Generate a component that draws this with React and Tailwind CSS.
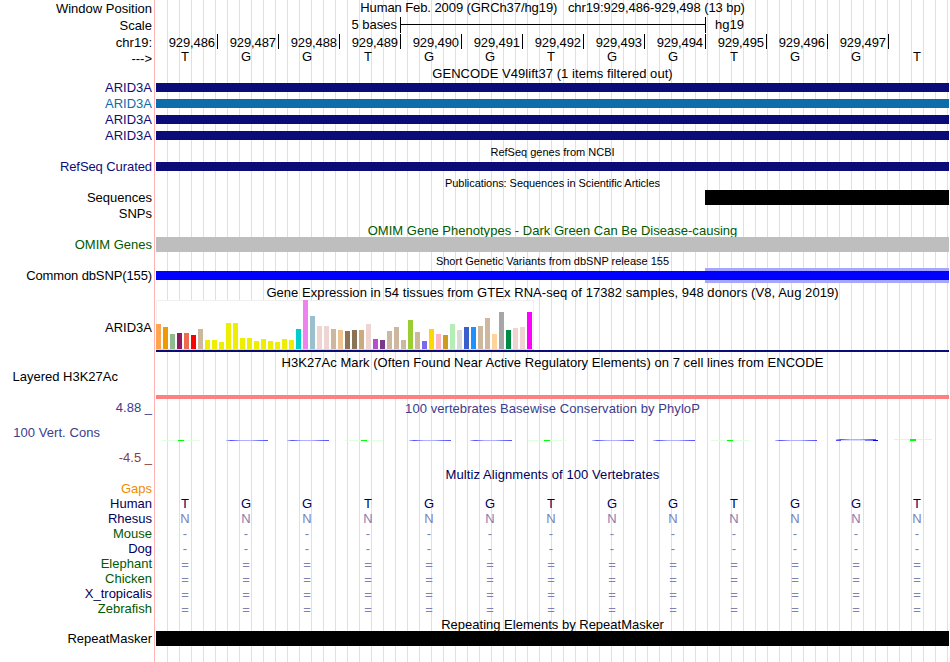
const BASES = ['T', 'G', 'G', 'T', 'G', 'G', 'T', 'G', 'G', 'T', 'G', 'G', 'T'];

// GTEx tissues in browser order: [bar height in px, tissue color]
const TISSUES = [
  [25, '#ffa54f'], [22, '#ee9a00'], [15, '#8fbc8f'], [16, '#8b1c62'], [16, '#ee6a50'], [14, '#ff0000'],
  [20, '#cdb79e'], [9, '#eeee00'], [9, '#eeee00'], [7, '#eeee00'], [26, '#eeee00'], [26, '#eeee00'],
  [11, '#eeee00'], [11, '#eeee00'], [8, '#eeee00'], [10, '#eeee00'], [8, '#eeee00'], [7, '#eeee00'],
  [10, '#eeee00'], [9, '#eeee00'], [20, '#00cdcd'], [49, '#ee82ee'], [33, '#9ac0cd'], [23, '#eed5d2'],
  [23, '#eed5d2'], [20, '#cdb79e'], [19, '#eec591'], [18, '#8b7355'], [19, '#8b7355'], [19, '#cdaa7d'],
  [25, '#eed5d2'], [10, '#b452cd'], [9, '#7a378b'], [18, '#cdb79e'], [22, '#cdb79e'], [9, '#cdb79e'],
  [29, '#9acd32'], [17, '#cdb79e'], [8, '#7a67ee'], [20, '#ffd700'], [15, '#ffb6c1'], [14, '#cd9b1d'],
  [25, '#b4eeb4'], [19, '#d9d9d9'], [22, '#3a5fcd'], [22, '#1e90ff'], [23, '#cdb79e'], [31, '#cdb79e'],
  [15, '#ffd39b'], [37, '#a6a6a6'], [19, '#008b45'], [21, '#eed5d2'], [22, '#eed5d2'], [37, '#ff00ff'],
];

const SPECIES = [
  { name: 'Human', color: 'text-[#00005a]', symbols: BASES, tone: 'text-[#00005a]' },
  { name: 'Rhesus', color: 'text-[#00005a]', symbols: BASES.map(() => 'N'), tone: 'text-[#8080b4]' },
  { name: 'Mouse', color: 'text-[#005a00]', symbols: BASES.map(() => '-'), tone: 'text-[#8080b4]' },
  { name: 'Dog', color: 'text-[#00005a]', symbols: BASES.map(() => '-'), tone: 'text-[#8080b4]' },
  { name: 'Elephant', color: 'text-[#005a00]', symbols: BASES.map(() => '='), tone: 'text-[#8080b4] pt-px' },
  { name: 'Chicken', color: 'text-[#005a00]', symbols: BASES.map(() => '='), tone: 'text-[#8080b4] pt-px' },
  { name: 'X_tropicalis', color: 'text-[#00005a]', symbols: BASES.map(() => '='), tone: 'text-[#8080b4] pt-px' },
  { name: 'Zebrafish', color: 'text-[#005a00]', symbols: BASES.map(() => '='), tone: 'text-[#8080b4] pt-px' },
];

function Row({ label, className = 'h-4', labelClass = 'text-black', children }) {
  return (
    <div className={`flex shrink-0 ${className}`}>
      <div className={`w-[152px] shrink-0 text-right whitespace-pre ${labelClass}`}>{label}</div>
      <div className="ml-1 w-[793px] shrink-0">{children}</div>
    </div>
  );
}

function Title({ className = '', children }) {
  return <div className={`text-center whitespace-pre ${className}`}>{children}</div>;
}

function Letters({ symbols, className = '' }) {
  return (
    <div className={`-ml-[1.5px] flex ${className}`}>
      {symbols.map((s, i) => (
        <span key={i} className="w-[61px] shrink-0 text-center">{s}</span>
      ))}
    </div>
  );
}

function Ruler() {
  return (
    <div className="ml-px flex h-[15px]">
      {BASES.slice(0, 12).map((_, i) => (
        <div key={i} className="w-[61px] border-r border-black pr-0.5 text-right leading-[17px] tracking-[-0.1px]">
          929,{486 + i}
        </div>
      ))}
    </div>
  );
}

function TissueChart() {
  return (
    <div className="h-[52px] border-b-2 border-[#0c0c78]">
      <div className="flex h-[50px] w-[378px] items-end gap-0.5 border-b border-[#d9d9d9] bg-white shadow-[inset_1px_1px_#f0f0f0,inset_-1px_0_#f0f0f0]">
        {TISSUES.map(([height, color], i) => (
          <div key={i} className="w-[5px] shrink-0" style={{ height, backgroundColor: color }} />
        ))}
      </div>
    </div>
  );
}

// Conservation scores are near zero here, so each base is squashed to a thin mark
function Conservation() {
  return (
    <svg width="793" height="8" viewBox="0 0 793 8" className="block" shapeRendering="crispEdges">
      <defs>
        <linearGradient id="flatG">
          <stop offset="0" stopColor="#c8c8ff" />
          <stop offset="0.12" stopColor="#5050ff" />
          <stop offset="0.35" stopColor="#b0b0ff" />
          <stop offset="0.6" stopColor="#b0b0ff" />
          <stop offset="0.8" stopColor="#7070ff" />
          <stop offset="1" stopColor="#5050ff" />
        </linearGradient>
      </defs>
      {BASES.map((base, i) => {
        const x = i * 61;
        if (base === 'T') {
          const last = i === 12;
          return (
            <g key={i}>
              <rect x={x + 6} y={last ? 3 : 4} width="38" height="1" fill={last ? '#d0ffd0' : '#e0ffe0'} />
              <rect x={x + 22} y={last ? 3 : 4} width="6" height={last ? 2 : 1} fill="#00ff00" />
            </g>
          );
        }
        if (i === 11) {
          return (
            <g key={i}>
              <rect x={x + 9} y="3" width="40" height="1" fill="url(#flatG)" />
              <rect x={x + 9} y="4" width="5" height="1" fill="#5050ff" />
              <rect x={x + 14} y="4" width="24" height="1" fill="#d8d8ff" />
              <rect x={x + 38} y="4" width="10" height="1" fill="#8080ff" />
              <rect x={x + 46} y="4" width="5" height="1" fill="#0000ff" />
            </g>
          );
        }
        return <rect key={i} x={x + 9} y="4" width="42" height="1" fill="url(#flatG)" />;
      })}
    </svg>
  );
}

function GeneRow({ labelClass, barClass }) {
  return (
    <Row label="ARID3A" labelClass={labelClass}>
      <div className={`mt-[3px] h-[9px] ${barClass}`} />
    </Row>
  );
}

export default function App() {
  return (
    <div className="h-[662px] w-[950px] overflow-hidden bg-white bg-[linear-gradient(#ffb4b4,#ffb4b4),repeating-linear-gradient(to_right,transparent_0_11px,#dcdcff_11px_12px)] bg-[length:1px_100%,793px_100%] bg-[position:154px_0,156px_0] bg-no-repeat font-['Liberation_Sans',Arial,sans-serif] text-[13px] leading-4 text-black">
      <div className="flex flex-col">
        <Row label="Window Position" className="h-[17px] leading-[17px]">
          <Title className="-mt-px tracking-[-0.08px]">{'Human Feb. 2009 (GRCh37/hg19)   chr19:929,486-929,498 (13 bp)'}</Title>
        </Row>
        <Row label="Scale" className="h-[17px] leading-[17px]">
          <div className="flex h-4 leading-4">
            <span className="w-[241px] text-right">5 bases</span>
            <div className="ml-[3px] flex w-[306px] flex-col border-x border-black pt-[7px]">
              <div className="h-px bg-black" />
            </div>
            <span className="ml-[9px]">hg19</span>
          </div>
        </Row>
        <Row label="chr19:" className="h-4 leading-[17px]">
          <Ruler />
        </Row>
        <Row label="--->" labelClass="pt-px">
          <Letters symbols={BASES} className="-mt-px" />
        </Row>
        <Row className="h-3.5">
          <Title className="tracking-[0.05px]">GENCODE V49lift37 (1 items filtered out)</Title>
        </Row>
        <GeneRow labelClass="text-[#0c0c78]" barClass="bg-[#0c0c78]" />
        <GeneRow labelClass="text-[#0c6cac]" barClass="bg-[#0c6cac]" />
        <GeneRow labelClass="text-[#0c0c78]" barClass="bg-[#0c0c78]" />
        <GeneRow labelClass="text-[#0c0c78]" barClass="bg-[#0c0c78]" />
        <Row className="h-[15px]">
          <Title className="text-[11px]">RefSeq genes from NCBI</Title>
        </Row>
        <Row label="RefSeq Curated" labelClass="tracking-[-0.08px] text-[#0c0c78]">
          <div className="mt-[3px] h-[9px] bg-[#0c0c78]" />
        </Row>
        <Row className="h-[15px]">
          <Title className="text-[11px] tracking-[-0.06px]">Publications: Sequences in Scientific Articles</Title>
        </Row>
        <Row label="Sequences">
          <div className="ml-[549px] h-[15px] bg-black" />
        </Row>
        <Row label="SNPs" />
        <Row className="h-[15px]">
          <Title className="pt-px tracking-[0.02px] text-[#005a00]">OMIM Gene Phenotypes - Dark Green Can Be Disease-causing</Title>
        </Row>
        <Row label="OMIM Genes" className="h-[15px]" labelClass="text-[#005a00]">
          <div className="h-[15px] bg-[#bebebe]" />
        </Row>
        <Row className="h-4">
          <Title className="pt-px text-[11px]">Short Genetic Variants from dbSNP release 155</Title>
        </Row>
        <Row label="Common dbSNP(155)" className="h-[15px]" labelClass="tracking-[-0.12px]">
          <div className="flex h-[15px] items-center bg-[linear-gradient(#a6a6ff,#a6a6ff)] bg-[length:244px_100%] bg-right bg-no-repeat">
            <div className="h-[9px] w-full bg-[#0000ff]" />
          </div>
        </Row>
        <Row className="h-[17px]">
          <Title className="pt-0.5 tracking-[0.055px]">Gene Expression in 54 tissues from GTEx RNA-seq of 17382 samples, 948 donors (V8, Aug 2019)</Title>
        </Row>
        <Row label="ARID3A" className="h-[52px]" labelClass="pt-5">
          <TissueChart />
        </Row>
        <Row className="h-4">
          <Title className="pt-[3px] tracking-[0.05px]">H3K27Ac Mark (Often Found Near Active Regulatory Elements) on 7 cell lines from ENCODE</Title>
        </Row>
        <Row label="Layered H3K27Ac" className="h-[31px]" labelClass="pt-px pr-[34px]">
          <div className="mt-[27px] h-1 bg-[#ff8080]" />
        </Row>
        <Row label="4.88 _" className="h-[25px]" labelClass="pt-px text-[#3c3c8c]">
          <Title className="pt-0.5 tracking-[0.06px] text-[#3c3c8c]">100 vertebrates Basewise Conservation by PhyloP</Title>
        </Row>
        <Row label="100 Vert. Cons" className="h-[25px]" labelClass="pt-px pr-[52px] tracking-[0.05px] text-[#3c3c8c]">
          <div className="pt-3">
            <Conservation />
          </div>
        </Row>
        <Row label="-4.5 _" className="h-4" labelClass="pt-px text-[#8c3c3c]" />
        <Row className="h-4">
          <Title className="pt-0.5 tracking-[0.08px] text-[#00005a]">Multiz Alignments of 100 Vertebrates</Title>
        </Row>
        <Row label="Gaps" className="h-[15px]" labelClass="text-[#f08c00]" />
        {SPECIES.map(({ name, color, symbols, tone }) => (
          <Row key={name} label={name} className="h-[15px]" labelClass={color}>
            <Letters symbols={symbols} className={tone} />
          </Row>
        ))}
        <Row className="h-[15px]">
          <Title className="pt-px">Repeating Elements by RepeatMasker</Title>
        </Row>
        <Row label="RepeatMasker" className="h-[15px]">
          <div className="h-[15px] bg-black" />
        </Row>
      </div>
    </div>
  );
}
